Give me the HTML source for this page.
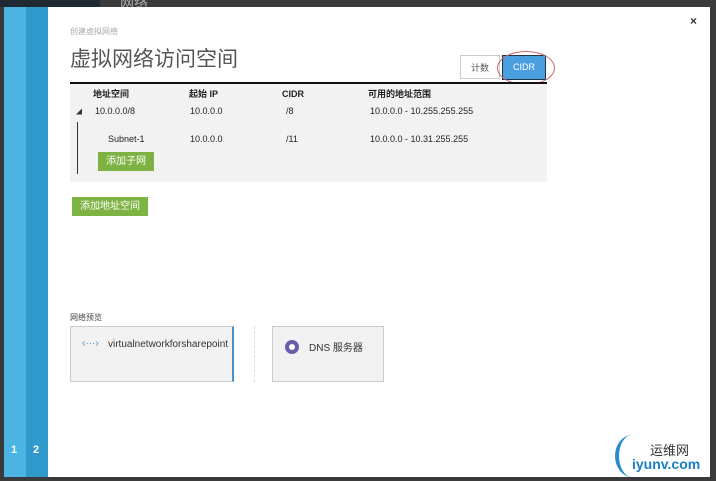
<html><head><style>
body{margin:0;width:716px;height:481px;background:#3a3a3a;position:relative;overflow:hidden;font-family:"Liberation Sans","Noto Sans CJK SC",sans-serif}
.a{position:absolute}
.t{font-size:9px;color:#222;line-height:12px}
.b{font-weight:bold}
</style></head><body>
<div class="a" style="left:0;top:0;width:100px;height:7px;background:#1f2a33"></div>
<div class="a" style="left:120px;top:0;width:60px;height:7px;color:#aaa;font-size:14px;line-height:6px;overflow:hidden">网络</div>
<div class="a" style="left:4px;top:7px;width:22px;height:470px;background:#4bb4e2"></div>
<div class="a" style="left:26px;top:7px;width:22px;height:470px;background:#2f9acb"></div>
<div class="a" style="left:48px;top:7px;width:662px;height:470px;background:#fff"></div>
<div class="a" style="left:11px;top:444px;color:#fff;font-size:11px;font-weight:bold">1</div>
<div class="a" style="left:33px;top:444px;color:#fff;font-size:11px;font-weight:bold">2</div>
<div class="a" style="left:690px;top:14px;font-size:12px;font-weight:bold;color:#333">×</div>
<div class="a" style="left:70px;top:26px;font-size:8px;color:#aaa">创建虚拟网络</div>
<div class="a" style="left:70px;top:43px;font-size:21px;color:#555">虚拟网络访问空间</div>
<div class="a" style="left:460px;top:55px;width:40px;height:24px;border:1px solid #ccc;font-size:9px;color:#555;text-align:center;line-height:24px;box-sizing:border-box">计数</div>
<div class="a" style="left:502px;top:55px;width:44px;height:25px;background:#4a9fe0;border:1px solid #234;box-sizing:border-box;font-size:9px;color:#fff;text-align:center;line-height:23px">CIDR</div>
<div class="a" style="left:497px;top:51px;width:56px;height:32px;border:1px solid #c66;border-radius:50%"></div>
<div class="a" style="left:70px;top:82px;width:477px;height:2px;background:#111"></div>
<div class="a" style="left:70px;top:84px;width:477px;height:98px;background:#f2f2f2"></div>
<div class="a t b" style="left:93px;top:88px">地址空间</div>
<div class="a t b" style="left:189px;top:88px">起始 IP</div>
<div class="a t b" style="left:282px;top:88px">CIDR</div>
<div class="a t b" style="left:368px;top:88px">可用的地址范围</div>
<div class="a" style="left:76px;top:107px;font-size:6px;color:#333">◢</div>
<div class="a t" style="left:95px;top:105px">10.0.0.0/8</div>
<div class="a t" style="left:190px;top:105px">10.0.0.0</div>
<div class="a t" style="left:286px;top:105px">/8</div>
<div class="a t" style="left:370px;top:105px">10.0.0.0 - 10.255.255.255</div>
<div class="a" style="left:77px;top:122px;width:1px;height:52px;background:#333"></div>
<div class="a t" style="left:108px;top:133px">Subnet-1</div>
<div class="a t" style="left:190px;top:133px">10.0.0.0</div>
<div class="a t" style="left:286px;top:133px">/11</div>
<div class="a t" style="left:370px;top:133px">10.0.0.0 - 10.31.255.255</div>
<div class="a" style="left:98px;top:152px;width:56px;height:19px;background:#7cb342;color:#fff;font-size:10px;text-align:center;line-height:19px">添加子网</div>
<div class="a" style="left:72px;top:197px;width:76px;height:19px;background:#7cb342;color:#fff;font-size:10px;text-align:center;line-height:19px">添加地址空间</div>
<div class="a" style="left:70px;top:312px;font-size:8px;color:#444">网络预览</div>
<div class="a" style="left:70px;top:326px;width:164px;height:56px;background:#f2f2f2;border:1px solid #ccc;box-sizing:border-box;border-right:2px solid #4a90c8"></div>
<div class="a" style="left:82px;top:338px;font-size:10px;color:#3a8fd0">‹···›</div>
<div class="a" style="left:108px;top:339px;font-size:10px;color:#333">virtualnetworkforsharepoint</div>
<div class="a" style="left:254px;top:326px;width:0;height:56px;border-left:1px dashed #ddd"></div>
<div class="a" style="left:272px;top:326px;width:112px;height:56px;background:#f2f2f2;border:1px solid #ccc;box-sizing:border-box"></div>
<div class="a" style="left:285px;top:340px;width:6px;height:6px;border:4px solid #6c5ba8;border-radius:50%;background:#fff"></div>
<div class="a" style="left:309px;top:339px;font-size:10px;color:#333">DNS 服务器</div>
<div class="a" style="left:615px;top:435px;width:30px;height:42px;border-left:4px solid #2a8cc8;border-radius:50%"></div>
<div class="a" style="left:650px;top:440px;font-size:13px;color:#333">运维网</div>
<div class="a" style="left:632px;top:456px;font-size:14px;font-weight:bold;color:#1a7fc0">iyunv.com</div>
<div class="a" style="left:710px;top:7px;width:6px;height:474px;background:#3a3a3a"></div>
</body></html>
